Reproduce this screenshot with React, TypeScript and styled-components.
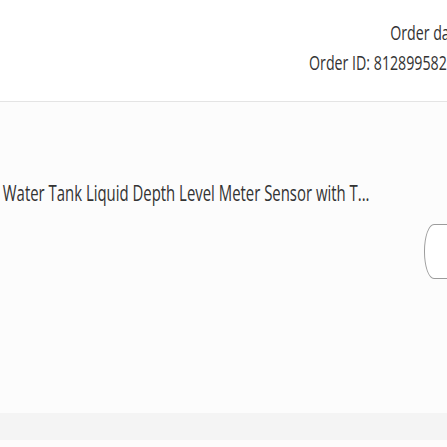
import { FC } from 'react';
import styled, { createGlobalStyle } from 'styled-components';

// ----------------------------------------------------------------------------

const GlobalStyle = createGlobalStyle`
  html, body {
    margin: 0;
    padding: 0;
    background: #ffffff;
    overflow: hidden;
  }

  body {
    font-family: 'Open Sans', 'DejaVu Sans', sans-serif;
    color: #333333;
  }
`;

// the text in this view is drawn narrow, like a condensed face
const SQUEEZE = 0.71;

const Page = styled.div`
  width: 447px;
  height: 447px;
  display: flex;
  flex-direction: column;
  overflow: hidden;
`;

const Header = styled.header`
  height: 102px;
  flex-shrink: 0;
  border-bottom: 1px solid #e4e4e4;
  display: flex;
  justify-content: flex-end;
  padding-top: 18px;
  box-sizing: border-box;
  overflow: hidden;
`;

const OrderInfo = styled.div`
  display: flex;
  flex-direction: column;
  align-items: flex-end;
  margin-right: -97px;
  transform: scaleX(${SQUEEZE});
  transform-origin: right center;
`;

const InfoLine = styled.div`
  font-size: 20px;
  line-height: 30px;
  white-space: nowrap;
`;

const Body = styled.main`
  height: 311px;
  flex-shrink: 0;
  background: #fcfcfc;
  padding-top: 76px;
  box-sizing: border-box;
  display: flex;
  flex-direction: column;
  gap: 16px;
  overflow: hidden;
`;

const Title = styled.div`
  padding-left: 4px;
  font-size: 21px;
  line-height: 30px;
  white-space: nowrap;
  transform: scaleX(${SQUEEZE});
  transform-origin: left center;
`;

const Actions = styled.div`
  display: flex;
  justify-content: flex-end;
`;

const Button = styled.button`
  width: 80px;
  height: 55px;
  margin-right: -57px;
  border: 1.5px solid #9c9c9c;
  border-radius: 10px / 27px;
  background: #ffffff;
`;

const Band = styled.div`
  height: 27px;
  flex-shrink: 0;
  background: #f4f4f4;
`;

const Footer = styled.div`
  flex: 1;
  background: #fdfbfb;
`;

// ----------------------------------------------------------------------------

const App: FC = () => {
  return (
    <>
      <GlobalStyle />
      <Page>
        <Header>
          <OrderInfo>
            <InfoLine>Order date: 2023-05-12</InfoLine>
            <InfoLine>Order ID: 812899582573640192837</InfoLine>
          </OrderInfo>
        </Header>
        <Body>
          <Title>Water Tank Liquid Depth Level Meter Sensor with T...</Title>
          <Actions>
            <Button type="button" />
          </Actions>
        </Body>
        <Band />
        <Footer />
      </Page>
    </>
  );
};

export default App;
